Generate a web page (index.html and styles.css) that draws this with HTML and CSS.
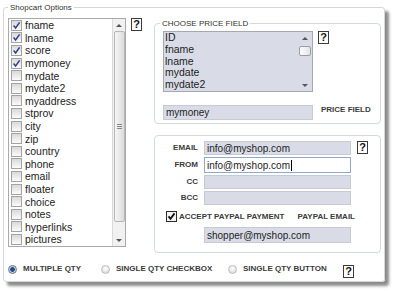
FILE: index.html
```html
<!DOCTYPE html>
<html>
<head>
<meta charset="utf-8">
<link rel="stylesheet" href="styles.css">
</head>
<body>
<fieldset class="frame">
  <legend class="frame-legend">Shopcart Options</legend>
  <div class="main">
    <div class="left">
      <div class="fieldlist">
        <div class="items">
          <div class="row"><span class="cb on"><svg viewBox="0 0 9 9"><path d="M1.6 4.6 L3.6 7 L7.6 1.4" /></svg></span>fname</div>
          <div class="row"><span class="cb on"><svg viewBox="0 0 9 9"><path d="M1.6 4.6 L3.6 7 L7.6 1.4" /></svg></span>lname</div>
          <div class="row"><span class="cb on"><svg viewBox="0 0 9 9"><path d="M1.6 4.6 L3.6 7 L7.6 1.4" /></svg></span>score</div>
          <div class="row"><span class="cb on"><svg viewBox="0 0 9 9"><path d="M1.6 4.6 L3.6 7 L7.6 1.4" /></svg></span>mymoney</div>
          <div class="row"><span class="cb"></span>mydate</div>
          <div class="row"><span class="cb"></span>mydate2</div>
          <div class="row"><span class="cb"></span>myaddress</div>
          <div class="row"><span class="cb"></span>stprov</div>
          <div class="row"><span class="cb"></span>city</div>
          <div class="row"><span class="cb"></span>zip</div>
          <div class="row"><span class="cb"></span>country</div>
          <div class="row"><span class="cb"></span>phone</div>
          <div class="row"><span class="cb"></span>email</div>
          <div class="row"><span class="cb"></span>floater</div>
          <div class="row"><span class="cb"></span>choice</div>
          <div class="row"><span class="cb"></span>notes</div>
          <div class="row"><span class="cb"></span>hyperlinks</div>
          <div class="row"><span class="cb"></span>pictures</div>
        </div>
        <div class="vscroll">
          <span class="arrow up"></span>
          <span class="thumb"><span class="grip"></span></span>
          <span class="spacer"></span>
          <span class="arrow down"></span>
        </div>
      </div>
      <span class="help">?</span>
    </div>
    <div class="right">
      <fieldset class="group price">
        <legend>CHOOSE PRICE FIELD</legend>
        <div class="price-top">
          <div class="pricelist">
            <div class="items">
              <div class="prow">ID</div>
              <div class="prow">fname</div>
              <div class="prow">lname</div>
              <div class="prow">mydate</div>
              <div class="prow">mydate2</div>
            </div>
            <div class="vscroll small">
              <span class="arrow up"></span>
              <span class="thumb"></span>
              <span class="spacer"></span>
              <span class="arrow down"></span>
            </div>
          </div>
          <span class="help">?</span>
        </div>
        <div class="price-bottom">
          <div class="input">mymoney</div>
          <span class="caps">PRICE FIELD</span>
        </div>
      </fieldset>
      <fieldset class="group email">
        <div class="grid">
          <span class="caps lbl">EMAIL</span>
          <div class="input fill">info@myshop.com</div>
          <span class="help">?</span>
          <span class="caps lbl">FROM</span>
          <div class="input fill active">info@myshop.com<span class="caret"></span></div>
          <span class="caps lbl">CC</span>
          <div class="input fill"></div>
          <span class="caps lbl">BCC</span>
          <div class="input fill"></div>
        </div>
        <div class="paypal">
          <span class="cb dark"><svg viewBox="0 0 9 9"><path d="M1.5 4.4 L3.5 6.8 L7.5 1.4" /></svg></span>
          <span class="caps accept">ACCEPT PAYPAL PAYMENT</span>
          <span class="caps ppemail">PAYPAL EMAIL</span>
        </div>
        <div class="input shopper">shopper@myshop.com</div>
      </fieldset>
    </div>
  </div>
  <div class="qty">
    <div class="opt opt-multi"><span class="radio on"></span><span class="caps">MULTIPLE QTY</span></div>
    <div class="opt opt-check"><span class="radio"></span><span class="caps">SINGLE QTY CHECKBOX</span></div>
    <div class="opt opt-button"><span class="radio"></span><span class="caps">SINGLE QTY BUTTON</span></div>
    <span class="help">?</span>
  </div>
</fieldset>
</body>
</html>
```

FILE: styles.css
```css
* { box-sizing: border-box; }
html, body { margin: 0; padding: 0; background: #fff; }
body {
  font-family: "Liberation Sans", Arial, sans-serif;
  color: #222;
  width: 395px;
  height: 291px;
  overflow: hidden;
}

.frame {
  margin: 2px 0 0 3px;
  width: 382px;
  min-width: 0;
  padding: 5px 0 3px 4px;
  border: 1px solid #d3d7dc;
  border-radius: 3px;
  box-shadow: 4px 4px 3px rgba(0, 0, 0, 0.45);
}
.frame-legend {
  padding: 0 2px;
  font-size: 8px;
  line-height: 11px;
  color: #333;
}

.main { display: flex; align-items: flex-start; }
.left { display: flex; align-items: flex-start; width: 146px; flex: none; }

.fieldlist {
  display: flex;
  width: 118px;
  height: 229px;
  border: 1px solid #a9a9a9;
  background: #fff;
}
.items { flex: 1; padding-left: 2px; }
.row {
  display: flex;
  align-items: center;
  height: 12.6px;
  font-size: 10.5px;
  color: #222;
  white-space: nowrap;
}
.cb {
  width: 11px;
  height: 11px;
  flex: none;
  border: 1px solid #a3a3a3;
  background: linear-gradient(#d9d9d9, #fbfbfb);
  margin-right: 3px;
  display: flex;
}
.cb svg { width: 9px; height: 9px; }
.cb path { fill: none; stroke: #2c3f8d; stroke-width: 1.5; }
.cb.dark { border-color: #2a2a2a; background: #f3f3f3; margin-right: 0; }
.cb.dark path { stroke: #111; stroke-width: 1.8; }

.vscroll {
  width: 13px;
  flex: none;
  display: flex;
  flex-direction: column;
  align-items: center;
  background: #f1f1f1;
  border-left: 1px solid #dadada;
}
.arrow {
  height: 12px;
  width: 100%;
  flex: none;
  display: flex;
  align-items: center;
  justify-content: center;
}
.arrow::before {
  content: "";
  border-left: 3px solid transparent;
  border-right: 3px solid transparent;
  border-bottom: 3px solid #555;
}
.arrow.down::before { border-bottom: 0; border-top: 3px solid #555; }
.thumb {
  width: 11px;
  height: 191px;
  flex: none;
  border: 1px solid #b7b7b7;
  border-radius: 2px;
  background: linear-gradient(90deg, #f6f6f6, #dcdcdc);
  display: flex;
  align-items: center;
  justify-content: center;
}
.grip {
  width: 5px;
  height: 5px;
  background: linear-gradient(#8a8a8a 0 1px, transparent 1px 2px, #8a8a8a 2px 3px, transparent 3px 4px, #8a8a8a 4px 5px);
}
.spacer { flex: 1; }

.help {
  width: 11px;
  height: 13px;
  flex: none;
  border: 1px solid #3a3a3a;
  background: #fff;
  color: #111;
  font-size: 11px;
  font-weight: bold;
  line-height: 11px;
  display: flex;
  align-items: center;
  justify-content: center;
  margin-left: 5px;
}

.right { width: 227px; flex: none; }

.group {
  margin: 0;
  min-width: 0;
  border: 1px solid #d4d9df;
  border-radius: 4px;
}
.group legend {
  padding: 0 2px;
  font-size: 8px;
  line-height: 11px;
  color: #333;
}

.price { padding: 2px 0 3px 5px; }
.price-top { display: flex; align-items: flex-start; margin-left: 3px; }
.pricelist {
  display: flex;
  width: 150px;
  height: 61px;
  border: 1px solid #a5a8b3;
  background: #d9dce7;
}
.pricelist .items { padding-left: 1px; }
.prow {
  height: 11.8px;
  line-height: 11.8px;
  font-size: 10.5px;
  color: #1c1c1c;
}
.vscroll.small {
  width: 14px;
  background: transparent;
  border-left: 0;
}
.vscroll.small .thumb {
  width: 12px;
  height: 10px;
  margin-top: 2px;
  background: linear-gradient(90deg, #fdfdfd, #e4e4e4);
  border-color: #9a9da6;
}

.price-bottom { display: flex; align-items: flex-start; margin: 13px 0 0 3px; }
.input {
  width: 150px;
  height: 15px;
  border: 1px solid #c7cad3;
  background: #d9dce7;
  font-size: 10px;
  color: #1c1c1c;
  padding-left: 2px;
  display: flex;
  align-items: center;
  white-space: nowrap;
}
.caps {
  font-size: 8px;
  font-weight: bold;
  line-height: 10px;
  color: #3b3b3b;
  white-space: nowrap;
}
.price-bottom .caps { margin-left: 8px; }

.email { margin-top: 11px; padding: 5px 0 9px 10px; }
.grid {
  display: grid;
  grid-template-columns: 33px 147px 11px;
  grid-template-rows: 14px 16px 14px 14px;
  column-gap: 6px;
  row-gap: 2px;
  align-items: center;
}
.grid .lbl { grid-column: 1; text-align: right; }
.grid .fill { grid-column: 2; width: auto; height: 100%; }
.grid .help { grid-column: 3; margin-left: 0; align-self: start; }
.input.active { background: #fff; border-color: #8ea9c9; }
.caret { width: 1px; height: 11px; background: #000; margin-left: 1px; }

.paypal { display: flex; align-items: center; height: 11px; margin-top: 6px; padding-left: 1px; }
.accept { margin-left: 2px; }
.ppemail { margin-left: 13px; }
.shopper { width: 147px; height: 16px; margin: 5px 0 0 39px; }

.qty { display: flex; align-items: flex-start; margin-top: 11px; }
.opt { display: flex; align-items: center; height: 10px; flex: none; }
.opt-multi { width: 93px; }
.opt-check { width: 127px; }
.opt-button { width: 115px; }
.radio {
  width: 9px;
  height: 9px;
  flex: none;
  border-radius: 50%;
  border: 1px solid #bcbcbc;
  background: radial-gradient(circle at 50% 35%, #ffffff, #d3d3d3);
  margin-right: 6px;
}
.radio.on {
  border-color: #6c7785;
  background: radial-gradient(circle, #1d4e8e 0 2px, #c8cdd4 2.6px);
}
.qty .help { margin-left: 0; margin-top: 1px; }
```
